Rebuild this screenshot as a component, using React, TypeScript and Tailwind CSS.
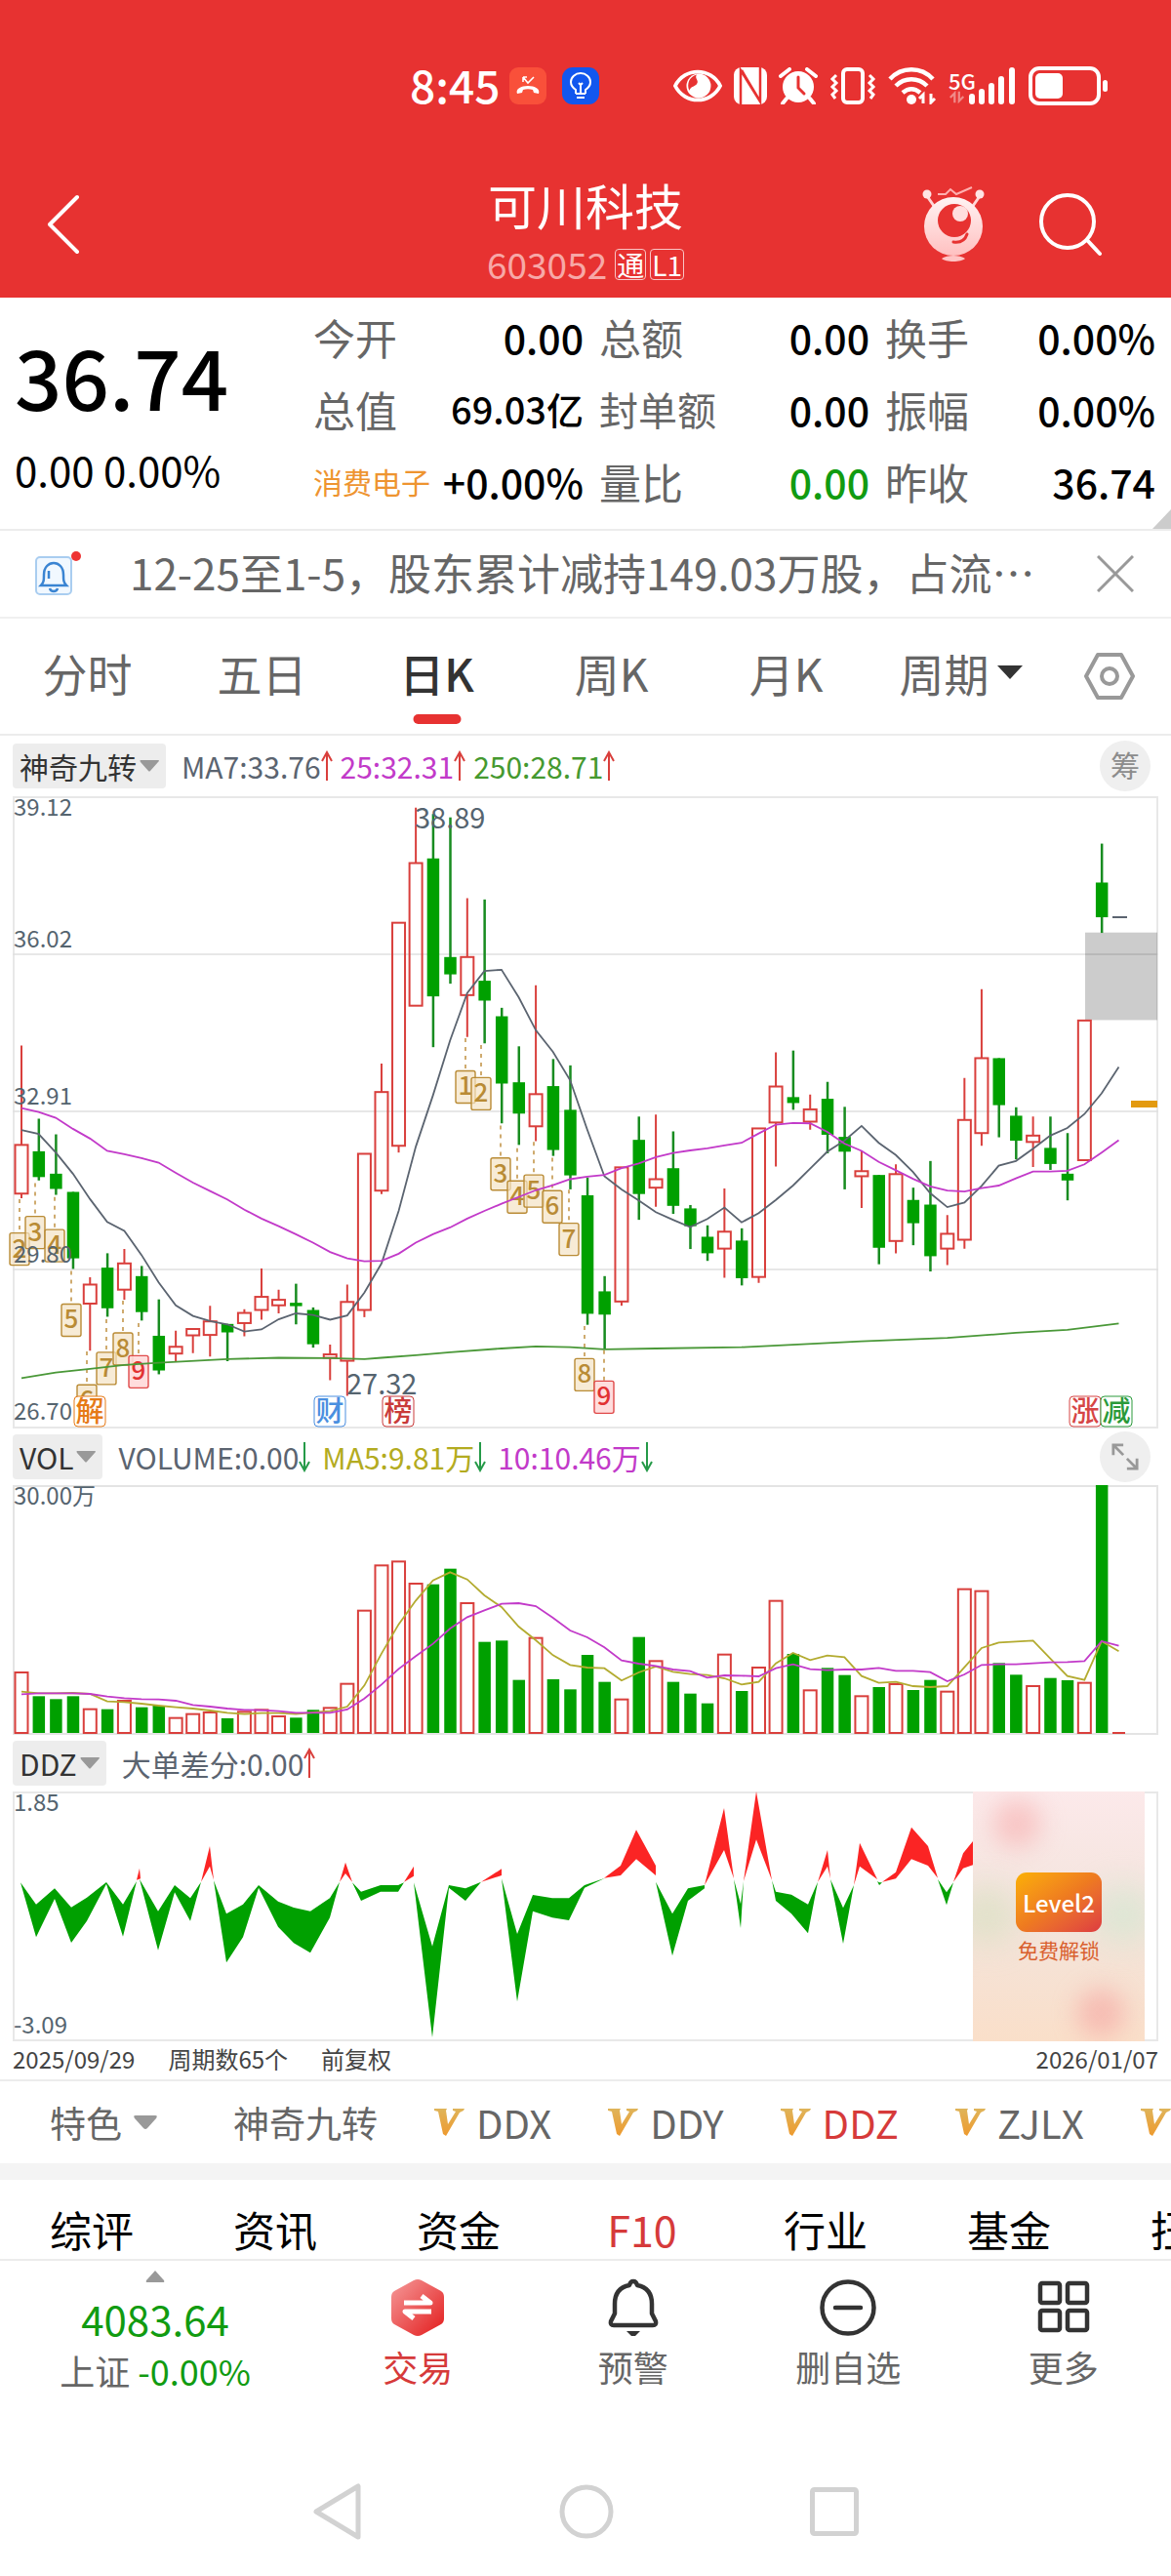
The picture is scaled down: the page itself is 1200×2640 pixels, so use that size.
// App.tsx

import type { ReactNode } from "react";

const CANDLE_RED = "#d93f3c";
const GREEN = "#00a000";
const AXIS = "#55646f";

// distance between two trading days, and the centre of the first one
const STEP = 17.57;
const FIRST = 9;
const dayX = (i: number) => FIRST + i * STEP;

// dir, high, body top, body bottom, low (chart ticks, counted downwards)
type Candle = ["r" | "g", number, number, number, number];

const CANDLES: Candle[] = [
  ["r", 627, 862, 977, 988],
  ["g", 800, 877, 938, 946],
  ["g", 837, 930, 966, 980],
  ["g", 973, 973, 1130, 1155],
  ["r", 1175, 1192, 1237, 1348],
  ["g", 1118, 1152, 1248, 1268],
  ["r", 1108, 1142, 1204, 1228],
  ["g", 1148, 1172, 1257, 1277],
  ["g", 1227, 1313, 1395, 1404],
  ["r", 1301, 1339, 1355, 1373],
  ["r", 1297, 1297, 1312, 1354],
  ["r", 1242, 1279, 1311, 1362],
  ["g", 1285, 1285, 1305, 1373],
  ["r", 1250, 1259, 1283, 1314],
  ["r", 1154, 1221, 1252, 1275],
  ["r", 1204, 1228, 1241, 1260],
  ["g", 1190, 1235, 1243, 1286],
  ["g", 1246, 1252, 1333, 1341],
  ["r", 1334, 1357, 1365, 1418],
  ["r", 1192, 1233, 1372, 1455],
  ["r", 883, 883, 1252, 1269],
  ["r", 670, 737, 970, 978],
  ["r", 337, 337, 864, 880],
  ["r", 65, 196, 533, 533],
  ["g", 80, 185, 511, 631],
  ["g", 88, 418, 459, 481],
  ["r", 279, 418, 508, 607],
  ["g", 282, 474, 521, 622],
  ["g", 538, 558, 717, 811],
  ["g", 629, 714, 788, 862],
  ["r", 485, 742, 818, 853],
  ["g", 659, 723, 874, 888],
  ["g", 674, 779, 934, 967],
  ["g", 939, 981, 1261, 1287],
  ["g", 1172, 1208, 1263, 1344],
  ["r", 915, 915, 1232, 1242],
  ["g", 795, 850, 978, 1039],
  ["r", 790, 943, 963, 1008],
  ["g", 830, 917, 1006, 1025],
  ["g", 1004, 1012, 1054, 1108],
  ["g", 1052, 1079, 1118, 1136],
  ["r", 965, 1067, 1107, 1176],
  ["g", 1059, 1088, 1177, 1194],
  ["r", 823, 823, 1174, 1188],
  ["r", 643, 724, 809, 913],
  ["g", 639, 749, 763, 779],
  ["r", 743, 778, 807, 826],
  ["g", 713, 753, 838, 882],
  ["g", 772, 843, 878, 967],
  ["r", 877, 924, 936, 1011],
  ["g", 933, 933, 1105, 1144],
  ["r", 908, 931, 1089, 1118],
  ["g", 963, 992, 1047, 1099],
  ["g", 900, 1003, 1125, 1161],
  ["r", 1028, 1072, 1107, 1146],
  ["r", 704, 803, 1086, 1107],
  ["r", 494, 657, 834, 864],
  ["g", 657, 657, 768, 844],
  ["g", 773, 793, 852, 896],
  ["r", 795, 840, 855, 914],
  ["g", 795, 869, 907, 921],
  ["g", 834, 930, 946, 993],
  ["r", 568, 568, 898, 898],
  ["g", 150, 242, 324, 361],
];

const MA7 = [
  827, 836, 880, 930, 990, 1044, 1065, 1122, 1187, 1241, 1266, 1278, 1286, 1303, 1298, 1274, 1260,
  1264, 1275, 1265, 1211, 1142, 1018, 866, 745, 615, 503, 451, 448, 513, 591, 642, 709, 826, 936,
  967, 993, 1021, 1039, 1056, 1037, 1010, 1045, 1023, 992, 958, 918, 878, 852, 817, 857, 886, 926,
  976, 1009, 998, 959, 911, 900, 871, 840, 822, 789, 740, 678,
];

const MA25 = [
  775, 784, 798, 824, 847, 876, 884, 893, 904, 928, 951, 971, 991, 1015, 1036, 1054, 1073, 1093,
  1115, 1130, 1137, 1136, 1119, 1093, 1073, 1057, 1036, 1018, 1001, 985, 969, 957, 943, 937, 933,
  917, 906, 891, 881, 875, 870, 863, 857, 835, 814, 810, 811, 831, 859, 876, 902, 922, 942, 960,
  970, 972, 964, 958, 941, 925, 925, 923, 908, 880, 851,
];

// day index, tick
const MA250: [number, number][] = [
  [0, 1413], [2, 1400], [4, 1391], [6, 1382], [8, 1377], [12, 1368], [15, 1365], [18, 1366],
  [20, 1368], [21, 1365], [23, 1359], [25, 1352], [28, 1343], [30, 1338], [32, 1340], [34, 1345],
  [37, 1343], [42, 1340], [45, 1334], [49, 1326], [54, 1318], [58, 1306], [61, 1299], [64, 1284],
];

// label, x, box top, dotted line start
const TURNS: [string, number, number, number][] = [
  ["2", 7, 1070, 990],
  ["3", 23, 1031, 952],
  ["4", 43, 1062, 985],
  ["5", 60, 1238, 1160],
  ["6", 76, 1429, 1350],
  ["7", 96, 1352, 1274],
  ["8", 113, 1306, 1230],
  ["9", 129, 1360, 1283],
  ["1", 464, 687, 610],
  ["2", 480, 703, 626],
  ["3", 500, 893, 816],
  ["4", 517, 947, 870],
  ["5", 534, 933, 855],
  ["6", 553, 970, 892],
  ["7", 570, 1047, 968],
  ["8", 586, 1367, 1290],
  ["9", 606, 1420, 1347],
];

const MARKS: [string, number, string][] = [
  ["解", 63, "#e67a17"],
  ["财", 309, "#4a8fe0"],
  ["榜", 379, "#c93a3a"],
  ["涨", 1083, "#d64545"],
  ["减", 1115, "#2a9a3a"],
];

const VOLUMES = [
  790, 866, 875, 866, 903, 906, 877, 900, 895, 930, 918, 913, 934, 911, 905, 925, 932, 908, 899,
  825, 600, 461, 449, 517, 522, 474, 577, 699, 695, 816, 684, 814, 845, 739, 822, 873, 684, 755,
  822, 858, 888, 735, 850, 775, 570, 736, 845, 779, 801, 863, 838, 826, 847, 816, 849, 534, 540,
  764, 800, 832, 810, 817, 822, 217,
];

const VOL_MA5 = [
  852, 857, 857, 856, 859, 882, 884, 889, 895, 900, 904, 910, 917, 921, 918, 918, 921, 916, 912,
  898, 833, 735, 645, 572, 510, 485, 507, 556, 592, 652, 694, 740, 770, 778, 780, 818, 793, 775,
  791, 798, 801, 811, 830, 822, 765, 733, 755, 741, 746, 804, 825, 822, 835, 838, 835, 777, 718,
  701, 698, 695, 750, 804, 816, 697, 728,
];

const VOL_MA10 = [
  860, 857, 857, 857, 859, 867, 872, 875, 876, 880, 893, 898, 904, 908, 909, 912, 917, 917, 917,
  907, 873, 830, 782, 743, 705, 658, 623, 602, 582, 580, 589, 625, 664, 685, 716, 756, 766, 773,
  784, 789, 809, 802, 803, 805, 780, 768, 783, 786, 784, 784, 779, 788, 788, 792, 820, 799, 770,
  768, 768, 765, 762, 761, 758, 697, 711,
];

// closed shapes of the DDZ ribbon: x, tick
const DDZ_GREEN = [
  "21,482 37,549 56,500 73,558 89,528 109,481 126,549 140,478 126,648 109,486 89,600 73,667 56,532 37,650",
  "143,472 162,570 179,490 195,530 206,480 195,600 179,512 162,690",
  "219,476 232,578 249,549 265,490 285,540 301,559 318,570 338,530 348,480 338,590 318,698 301,668 285,618 265,498 249,650 232,728",
  "361,482 370,510 390,490 408,490 414,482 408,510 390,510 370,538",
  "424,482 443,678 460,490 477,500 493,480 477,538 460,498 443,958",
  "514,470 530,640 546,520 566,530 583,530 599,490 620,468 599,498 583,598 566,590 546,570 530,848",
  "672,480 689,578 705,500 722,490 722,500 705,538 689,707",
  "752,472 759,548 762,478 759,622",
  "791,475 795,510 811,519 828,549 838,480 828,638 811,578 795,538",
  "851,472 864,560 875,490 864,670",
  "899,478 901,482 904,482 901,490",
  "961,472 970,512 977,482 970,551",
];

const DDZ_RED = [
  "140,474 143,438 144,470",
  "206,480 215,370 219,474 215,432",
  "348,480 354,420 361,480 354,454",
  "414,480 424,432 424,462",
  "493,480 514,440 514,460",
  "619,468 636,430 652,320 672,430 672,460 652,410 636,460",
  "722,490 742,253 752,470 742,382",
  "762,478 775,202 791,475 775,350",
  "838,480 848,382 851,470 848,432",
  "875,490 881,360 899,472 881,432",
  "904,480 918,450 934,312 951,370 961,468 951,430 934,410 918,470",
  "977,480 987,392 997,355 997,428 987,438",
];

const kY = (t: number) => (t - 38) * 0.4337;
const volY = (t: number) => (t - 217) / 3;
const ddzY = (t: number) => (t - 202) / 3;

const toLine = (ticks: number[], y: (t: number) => number) =>
  ticks.map((t, i) => `${dayX(i)},${y(t)}`).join(" ");

const toShape = (shape: string) =>
  shape
    .split(" ")
    .map((p) => p.split(",").map(Number))
    .map(([x, t]) => `${x - 13},${ddzY(t)}`)
    .join(" ");

export default function App() {
  return (
    <div className="min-h-screen overflow-hidden bg-white font-['Noto_Sans_CJK_SC','Noto_Sans',sans-serif] leading-none text-black">
      <header className="bg-[#e73231] text-white">
        <StatusBar />
        <TitleBar />
      </header>

      <QuotePanel />
      <NewsStrip />
      <PeriodTabs />

      <main className="px-[13px]">
        {/* Candles */}
        <div className="flex h-[62px] items-center">
          <PickerButton label="神奇九转" />
          <div className="ml-4 flex gap-2">
            <Reading color="text-[#5b6470]" dir="up">MA7:33.76</Reading>
            <Reading color="text-[#c23ac9]" dir="up">25:32.31</Reading>
            <Reading color="text-[#45992f]" dir="up">250:28.71</Reading>
          </div>
          <button className="mr-2 ml-auto size-[52px] rounded-full bg-[#efefef] pb-1 text-[30px] text-[#8c8c8c]">
            筹
          </button>
        </div>
        <CandleChart />

        {/* Volume */}
        <div className="flex h-[58px] items-center">
          <PickerButton label="VOL" />
          <div className="ml-4 flex gap-3">
            <Reading color="text-[#5b6470]" dir="down">VOLUME:0.00</Reading>
            <Reading color="text-[#b3ab20]" dir="down">MA5:9.81万</Reading>
            <Reading color="text-[#c23ac9]" dir="down">10:10.46万</Reading>
          </div>
          <button
            aria-label="展开"
            className="mr-2 ml-auto flex size-[52px] items-center justify-center rounded-full bg-[#efefef]"
          >
            <svg width="28" height="28" viewBox="0 0 30 30" fill="none" stroke="#999" strokeWidth="3">
              <path d="M2 13V2h11M3 3l10 10M28 17v11H17M27 27L17 17" />
            </svg>
          </button>
        </div>
        <VolumeChart />

        {/* DDZ */}
        <div className="flex h-[58px] items-center">
          <PickerButton label="DDZ" />
          <div className="ml-4 flex gap-2">
            <Reading color="text-[#5b6470]" dir="up">大单差分:0.00</Reading>
          </div>
        </div>
        <div className="relative">
          <DdzChart />
          <UnlockCard />
        </div>

        <div className="flex h-[39px] items-center gap-[34px] pb-1 text-[24px] text-[#444]">
          <span>2025/09/29</span>
          <span>周期数65个</span>
          <span>前复权</span>
          <span className="ml-auto">2026/01/07</span>
        </div>
      </main>

      <FeatureTabs />
      <SectionTabs />
      <BottomBar />
      <SystemNav />
    </div>
  );
}

/* ---------- Header ---------- */

function StatusBar() {
  return (
    <div className="flex h-[130px] items-center pt-[46px] pr-16 pl-[35%]">
      <span className="pb-1 text-[46px] font-medium">8:45</span>
      <svg className="ml-[10px] shrink-0" width="38" height="38" viewBox="0 0 38 38">
        <rect width="38" height="38" rx="9" fill="#f9503a" />
        <path d="M8 27c-2-5 4-8 11-8s13 3 11 8l-5-1-1-3c-3-1-7-1-10 0l-1 3z" fill="#fff" />
        <path d="M14 10v5M14 10h4M14 10l5 6 6-6" fill="none" stroke="#fff" strokeWidth="1.6" />
      </svg>
      <svg className="ml-4 shrink-0" width="38" height="38" viewBox="0 0 38 38">
        <rect width="38" height="38" rx="11" fill="#1257ee" />
        <path
          d="M14 27v-4c-3-2-5-5-5-8a10 9 0 0 1 20 0c0 3-2 6-5 8v4M14 27h10M15 31h8M19 27v-9M17 16l2 2 2-2"
          fill="none"
          stroke="#fff"
          strokeWidth="2"
        />
      </svg>

      <div className="ml-auto flex shrink-0 items-center">
        {/* eye */}
        <svg width="50" height="36" viewBox="0 0 52 36">
          <path d="M2 18C12-2 40-2 50 18 40 38 12 38 2 18z" fill="none" stroke="#fff" strokeWidth="4" />
          <circle cx="27" cy="18" r="13" fill="#fff" />
          <path d="M25 6c-3 4 3 6 0 10-2 3-6 2-8 7-3-7 0-15 8-17z" fill="#e73231" />
        </svg>
        {/* nfc */}
        <svg className="ml-3" width="34" height="38" viewBox="0 0 34 38">
          <rect width="34" height="38" rx="8" fill="#fff" />
          <path d="M7 38V3l20 32M27 0v35L8 3" fill="none" stroke="#e73231" strokeWidth="2.500" />
        </svg>
        {/* alarm */}
        <svg className="ml-3" width="40" height="38" viewBox="0 0 40 38">
          <circle cx="20" cy="20" r="16" fill="#fff" />
          <path d="M2 9l9-7M38 9l-9-7M8 32l-4 5M32 32l4 5" stroke="#fff" strokeWidth="4" strokeLinecap="round" />
          <path d="M20 10v11l6 6" fill="none" stroke="#e73231" strokeWidth="3" strokeLinecap="round" />
        </svg>
        {/* vibrate */}
        <svg className="ml-3" width="48" height="38" viewBox="0 0 48 38" fill="none" stroke="#fff" strokeWidth="4">
          <rect x="14" y="2" width="20" height="34" rx="4" />
          <path d="M7 8L3 12l4 4-4 4 4 4-4 4 3 4M41 8l4 4-4 4 4 4-4 4 4 4-3 4" strokeWidth="3" />
        </svg>
        {/* wifi */}
        <svg className="ml-3" width="50" height="38" viewBox="0 0 50 38" fill="none" stroke="#fff" strokeWidth="4.500">
          <path d="M2 12C14-1 34-1 46 12M8 19c9-9 23-9 32 0M15 26c6-5 12-5 18 0" />
          <circle cx="24" cy="33" r="5" fill="#fff" stroke="none" />
          <path d="M36 37v-9l-4 4M44 27v9l4-4" strokeWidth="3" />
        </svg>
        {/* cell signal */}
        <div className="ml-3 flex flex-col">
          <span className="text-[22px] font-medium">5G</span>
          <svg width="18" height="13" viewBox="0 0 20 13" fill="none" stroke="#f08a88" strokeWidth="2.500">
            <path d="M7 13V2L2 7M12 0v11l5-5" />
          </svg>
        </div>
        <svg className="-ml-2" width="50" height="38" viewBox="0 0 50 38" stroke="#fff" strokeWidth="6" strokeLinecap="round">
          <path d="M4 30v5M14 25v10M24 19v16M34 12v23M45 3v32" />
        </svg>
        {/* battery */}
        <svg className="ml-3" width="82" height="40" viewBox="0 0 82 40">
          <rect x="2" y="2" width="70" height="36" rx="9" fill="none" stroke="#fff" strokeWidth="4" />
          <rect x="7" y="7" width="28" height="26" rx="5" fill="#fff" />
          <rect x="76" y="14" width="5" height="12" rx="2.500" fill="#fff" />
        </svg>
      </div>
    </div>
  );
}

function TitleBar() {
  return (
    <div className="grid h-[175px] grid-cols-3 items-center pt-6">
      <button aria-label="返回" className="ml-11 w-fit">
        <svg width="42" height="64" viewBox="0 0 42 64" fill="none" stroke="#fff" strokeWidth="4" strokeLinecap="round" strokeLinejoin="round">
          <path d="M35 4L7 32l28 28" />
        </svg>
      </button>

      <div className="flex flex-col items-center pt-3">
        <h1 className="text-[50px] leading-[54px] font-normal">可川科技</h1>
        <div className="mt-4 flex items-center gap-1">
          <span className="mr-1 text-[37px] text-[#f7a8a7]">603052</span>
          <span className="rounded-sm border border-[#f9c4c4] px-px text-[28px] leading-[30px]">通</span>
          <span className="rounded-sm border border-[#f9c4c4] px-px text-[28px] leading-[30px]">L1</span>
        </div>
      </div>

      <div className="flex items-center justify-end gap-[54px] pr-[70px]">
        <button aria-label="助手">
          <svg width="66" height="78" viewBox="0 0 66 78">
            <defs>
              <linearGradient id="bot" x1="0" y1="0" x2="0" y2="1">
                <stop offset="0" stopColor="#fff3f3" />
                <stop offset="1" stopColor="#ffc0c0" />
              </linearGradient>
            </defs>
            <path d="M6 10l7 10M60 10l-7 10" stroke="#ffd6d6" strokeWidth="3" />
            <circle cx="6" cy="8" r="4.500" fill="#ffe4e4" />
            <circle cx="60" cy="8" r="4.500" fill="#ffe4e4" />
            <path d="M17 8h8l5-5 6 5 16-7" fill="none" stroke="#ffb0b0" strokeWidth="2" />
            <circle cx="33" cy="41" r="30" fill="url(#bot)" />
            <circle cx="34" cy="35" r="17" fill="#e73231" />
            <circle cx="40" cy="28" r="8" fill="#ffdede" />
            <path d="M33 57c7 1 12-2 14-8" fill="none" stroke="#e73231" strokeWidth="3" strokeLinecap="round" />
            <path d="M21 74c5-4 19-4 24 0-4 4-20 4-24 0z" fill="#ffc4c4" />
          </svg>
        </button>
        <button aria-label="搜索">
          <svg width="66" height="66" viewBox="0 0 66 66" fill="none" stroke="#fff" strokeWidth="4" strokeLinecap="round">
            <circle cx="30" cy="30" r="27" />
            <path d="M50 49l13 14" />
          </svg>
        </button>
      </div>
    </div>
  );
}

/* ---------- Quote ---------- */

function QuotePanel() {
  return (
    <section className="relative flex h-[239px] border-b-2 border-[#ececec] pr-4 pl-[15px]">
      <div className="w-[306px] shrink-0">
        <div className="pt-[36px] text-[85px] font-medium">36.74</div>
        <div className="pt-[34px] text-[42px]">0.00 0.00%</div>
      </div>
      <dl className="grid flex-1 grid-cols-3 grid-rows-3 gap-x-4 pt-1 pb-3">
        <Field label="今开" value="0.00" />
        <Field label="总额" value="0.00" />
        <Field label="换手" value="0.00%" />
        <Field label="总值" value="69.03亿" valueClass="text-[38px]" />
        <Field label="封单额" value="0.00" labelClass="text-[40px] text-[#666]" />
        <Field label="振幅" value="0.00%" />
        <Field label="消费电子" value="+0.00%" labelClass="text-[30px] text-[#ee9430]" />
        <Field label="量比" value="0.00" valueClass="text-[41px] text-[#119b11]" />
        <Field label="昨收" value="36.74" />
      </dl>
      <svg className="absolute right-0 bottom-0" width="19" height="20" viewBox="0 0 19 20">
        <path d="M19 0v20H0z" fill="#ccc" />
      </svg>
    </section>
  );
}

function Field({
  label,
  value,
  labelClass = "text-[43px] text-[#666]",
  valueClass = "text-[41px]",
}: {
  label: string;
  value: string;
  labelClass?: string;
  valueClass?: string;
}) {
  return (
    <div className="flex items-center justify-between whitespace-nowrap">
      <dt className={labelClass}>{label}</dt>
      <dd className={"font-medium " + valueClass}>{value}</dd>
    </div>
  );
}

function NewsStrip() {
  return (
    <section className="flex h-[90px] items-center border-b-2 border-[#f0f0f0] pr-[38px] pl-[35px]">
      <svg className="shrink-0" width="50" height="50" viewBox="0 0 50 50">
        <rect x="2" y="8" width="36" height="38" rx="4" fill="#f1f8ff" stroke="#a9cdf0" strokeWidth="2" />
        <path
          d="M7 37c3-3 3-6 3-11 0-16 20-16 20 0 0 5 0 8 3 11zM16 40c1 4 7 4 8 0M15 22v8"
          fill="none"
          stroke="#3a84d2"
          strokeWidth="2.500"
        />
        <circle cx="43" cy="7" r="5" fill="#e33" />
      </svg>
      <a href="#news" className="ml-12 min-w-0 flex-1 truncate pb-1 text-[44px] leading-[64px] text-[#666]">
        12-25至1-5，股东累计减持149.03万股，占流…
      </a>
      <button aria-label="关闭" className="ml-4">
        <svg width="38" height="38" viewBox="0 0 38 38" stroke="#999" strokeWidth="3">
          <path d="M1 1l36 36M37 1L1 37" />
        </svg>
      </button>
    </section>
  );
}

function PeriodTabs() {
  return (
    <nav className="flex h-[120px] items-center border-b-2 border-[#ececec] text-[46px] text-[#666]">
      <button className="flex-1 pb-2">分时</button>
      <button className="flex-1 pb-2">五日</button>
      <button className="relative flex-1 pb-2 font-medium text-[#333]">
        日K
        <span className="absolute top-[66px] left-1/2 h-[10px] w-[49px] -translate-x-1/2 rounded-full bg-[#e73231]" />
      </button>
      <button className="flex-1 pb-2">周K</button>
      <button className="flex-1 pb-2">月K</button>
      <button className="flex flex-1 items-center justify-center gap-2 pb-2">
        周期
        <svg width="26" height="14" viewBox="0 0 26 14">
          <path d="M0 0h26L13 14z" fill="#333" />
        </svg>
      </button>
      <button aria-label="设置" className="flex w-[126px] justify-center">
        <svg width="52" height="48" viewBox="0 0 52 48" fill="none" stroke="#999" strokeWidth="4">
          <path d="M14 2h24l12 22-12 22H14L2 24z" strokeLinejoin="round" />
          <circle cx="26" cy="24" r="8" />
        </svg>
      </button>
    </nav>
  );
}

/* ---------- Charts ---------- */

function PickerButton({ label }: { label: string }) {
  return (
    <button className="flex h-[46px] items-center gap-[3px] rounded bg-[#ededed] px-[7px] text-[30px] text-[#333]">
      {label}
      <svg width="20" height="12" viewBox="0 0 20 12">
        <path d="M1 0h18q2 0 0 2l-8 9q-1 1-2 0L1 2q-1-2 0-2z" fill="#999" />
      </svg>
    </button>
  );
}

function Reading({ color, dir, children }: { color: string; dir: "up" | "down"; children: ReactNode }) {
  return (
    <span className={"flex items-center text-[30px] " + color}>
      {children}
      {dir === "up" ? (
        <svg width="12" height="32" viewBox="0 0 12 32" fill="none" stroke={CANDLE_RED} strokeWidth="2">
          <path d="M6 31V2M1 11l5-9 5 9" />
        </svg>
      ) : (
        <svg width="12" height="32" viewBox="0 0 12 32" fill="none" stroke="#259a48" strokeWidth="2">
          <path d="M6 1v29M1 21l5 9 5-9" />
        </svg>
      )}
    </span>
  );
}

function CandleChart() {
  return (
    <svg className="block h-auto w-full overflow-visible" viewBox="0 0 1174 648" fontSize="24">
      <rect x="1" y="1" width="1172" height="646" fill="none" stroke="#e8e8e8" strokeWidth="2" />
      <path d="M0 162h1174M0 323h1174M0 485h1174" stroke="#e0e0e0" strokeWidth="1.500" />

      {/* price gap */}
      <rect x="1099" y={kY(360)} width="74" height={kY(567) - kY(360)} fill="#000" fillOpacity="0.2" />

      {CANDLES.map(([dir, high, top, bottom, low], i) => {
        const x = dayX(i);
        return dir === "g" ? (
          <g key={i} fill={GREEN}>
            <rect x={x - 1} y={kY(high)} width="2.500" height={kY(low) - kY(high)} fill="#188c20" />
            <rect x={x - 6} y={kY(top)} width="12.500" height={kY(bottom) - kY(top)} />
          </g>
        ) : (
          <g key={i} fill="none" stroke={CANDLE_RED} strokeWidth="2">
            <path d={`M${x} ${kY(high)}V${kY(top)}M${x} ${kY(bottom)}V${kY(low)}`} />
            <rect x={x - 6.5} y={kY(top)} width="13" height={kY(bottom) - kY(top)} />
          </g>
        );
      })}

      {/* nine turn marks */}
      {TURNS.map(([label, x, top, from], i) => {
        const last = label === "9";
        return (
          <g key={i}>
            <path d={`M${x} ${kY(from)}V${kY(top)}`} stroke="#c09040" strokeWidth="1.500" strokeDasharray="4 5" />
            <rect
              x={x - 10}
              y={kY(top)}
              width="20"
              height="33"
              rx="2"
              fill={last ? "#ffd9d9" : "#f3e3c5"}
              fillOpacity={last ? 0.9 : 0.7}
              stroke={last ? "#e04a4a" : "#b98b35"}
              strokeWidth="1.400"
            />
            <text
              x={x}
              y={kY(top) + 25}
              fontSize="26"
              fontWeight="500"
              textAnchor="middle"
              fill={last ? "#e23232" : "#b98b35"}
            >
              {label}
            </text>
          </g>
        );
      })}

      <g fill="none" strokeWidth="1.800">
        <polyline points={MA250.map(([i, t]) => `${dayX(i)},${kY(t)}`).join(" ")} stroke="#4a9838" />
        <polyline points={toLine(MA7, kY)} stroke="#5b6470" />
        <polyline points={toLine(MA25, kY)} stroke="#c23ac9" />
      </g>

      <path d="M1127 124h15" stroke="#5b6470" strokeWidth="2" />
      <rect x="1146" y="312" width="27" height="7" fill="#e39a10" />

      {MARKS.map(([label, x, color]) => (
        <g key={label}>
          <rect x={x} y="615" width="32" height="31" rx="4" fill="#fff" stroke={color} />
          <text x={x + 16} y="641" fontSize="29" fontWeight="500" textAnchor="middle" fill={color}>
            {label}
          </text>
        </g>
      ))}

      <g fill={AXIS}>
        <text x="1" y="20">39.12</text>
        <text x="1" y="155">36.02</text>
        <text x="1" y="316">32.91</text>
        <text x="1" y="478">29.80</text>
        <text x="1" y="639">26.70</text>
        <text x="412" y="33" fontSize="29">38.89</text>
        <text x="342" y="613" fontSize="29">27.32</text>
      </g>
    </svg>
  );
}

function VolumeChart() {
  return (
    <svg className="block h-auto w-full overflow-visible" viewBox="0 0 1174 256" fontSize="24">
      <rect x="1" y="1" width="1172" height="254" fill="none" stroke="#e4e4e4" strokeWidth="2" />
      {VOLUMES.map((t, i) => {
        const x = dayX(i);
        return CANDLES[i][0] === "g" ? (
          <rect key={i} x={x - 6} y={volY(t)} width="12.500" height={254 - volY(t)} fill={GREEN} />
        ) : (
          <rect
            key={i}
            x={x - 6.5}
            y={volY(t) + 1}
            width="13"
            height={253 - volY(t)}
            fill="#fff"
            stroke={CANDLE_RED}
            strokeWidth="2"
          />
        );
      })}
      <path d="M1127 254h13" stroke={CANDLE_RED} strokeWidth="2" />
      <g fill="none" strokeWidth="1.800">
        <polyline points={toLine(VOL_MA5, volY)} stroke="#b3ab30" />
        <polyline points={toLine(VOL_MA10, volY)} stroke="#c23ac9" />
      </g>
      <text x="1" y="20" fill={AXIS}>
        30.00万
      </text>
    </svg>
  );
}

function DdzChart() {
  return (
    <svg className="block h-auto w-full overflow-visible" viewBox="0 0 1174 256" fontSize="24">
      <rect x="1" y="1" width="1172" height="254" fill="none" stroke="#e8e8e8" strokeWidth="2" />
      {DDZ_GREEN.map((s) => (
        <polygon key={s} points={toShape(s)} fill={GREEN} />
      ))}
      {DDZ_RED.map((s) => (
        <polygon key={s} points={toShape(s)} fill="#fb2424" />
      ))}
      <g fill={AXIS}>
        <text x="1" y="20">1.85</text>
        <text x="1" y="248">-3.09</text>
      </g>
    </svg>
  );
}

function UnlockCard() {
  return (
    <button className="absolute inset-y-0 right-[14px] flex w-[15%] flex-col items-center justify-center gap-2 overflow-hidden bg-linear-to-b from-[#fce9ea] via-[#f3e4dc] to-[#fadfc9]">
      <span className="absolute top-2 left-5 size-[50px] rounded-full bg-[#f7a5a5]/50 blur-md" />
      <span className="absolute right-5 bottom-1 size-[50px] rounded-full bg-[#f59a9a]/50 blur-md" />
      <span className="absolute top-24 -left-4 size-[60px] rounded-full bg-[#cfe0b8]/50 blur-lg" />
      <span className="absolute top-24 -right-2 size-[60px] rounded-full bg-[#cfe8cf]/60 blur-lg" />
      <span className="relative flex h-[61px] w-[88px] items-center justify-center rounded-[11px] bg-linear-to-br from-[#fbb000] via-[#ee7a20] to-[#dd3a40] text-[24px] font-medium text-white">
        Level2
      </span>
      <span className="relative text-[21px] text-[#d9602e]">免费解锁</span>
    </button>
  );
}

/* ---------- Tabs below the charts ---------- */

function FeatureTabs() {
  return (
    <nav className="flex h-[103px] items-center overflow-hidden border-t-2 border-b-[17px] border-t-[#ececec] border-b-[#f4f4f4] pl-[51px] text-[37px] whitespace-nowrap text-[#666]">
      <button className="flex items-center gap-3">
        特色
        <svg width="24" height="14" viewBox="0 0 24 14">
          <path d="M2 0h20q3 0 1 3l-9 10q-2 2-4 0L1 3q-2-3 1-3z" fill="#999" />
        </svg>
      </button>
      <span className="mr-[26px] ml-[52px] h-11 w-px bg-[#e4e4e4]" />
      <button className="mr-[58px]">神奇九转</button>
      <div className="flex gap-[58px] text-[40px]">
        <VipTab label="DDX" />
        <VipTab label="DDY" />
        <VipTab label="DDZ" active />
        <VipTab label="ZJLX" />
        <VipTab label="BBD" />
      </div>
    </nav>
  );
}

function VipTab({ label, active = false }: { label: string; active?: boolean }) {
  return (
    <button className={"flex items-center gap-3 " + (active ? "text-[#d63a3a]" : "text-[#666]")}>
      <svg width="31" height="28" viewBox="0 0 31 28">
        <defs>
          <linearGradient id="vip" x1="0" y1="0" x2="0" y2="1">
            <stop offset="0" stopColor="#dfb45a" />
            <stop offset="1" stopColor="#ee9a2e" />
          </linearGradient>
        </defs>
        <path d="M0 0h13l-1 2 2 14 8-13-3-1V0h12l-1 2-4 2L12 28 9 26 4 3 0 2z" fill="url(#vip)" />
      </svg>
      {label}
    </button>
  );
}

function SectionTabs() {
  const tabs = ["综评", "资讯", "资金", "F10", "行业", "基金", "扭亏"];
  return (
    <nav className="flex h-[83px] items-center overflow-hidden border-b-2 border-[#ececec] pt-5 text-[43px] whitespace-nowrap">
      {tabs.map((tab) => (
        <button
          key={tab}
          className={"w-[188px] shrink-0 " + (tab === "F10" ? "text-[#d63a3a]" : "text-black")}
        >
          {tab}
        </button>
      ))}
    </nav>
  );
}

/* ---------- Bottom ---------- */

function BottomBar() {
  return (
    <nav className="flex h-[143px]">
      <button className="flex w-[318px] flex-col items-center pt-[10px]">
        <svg width="20" height="12" viewBox="0 0 20 12">
          <path d="M10 0l9 10q1 2-1 2H2q-2 0-1-2z" fill="#999" />
        </svg>
        <span className="mt-4 text-[42px] text-[#119b11]">4083.64</span>
        <span className="mt-[14px] text-[36px] text-[#119b11]">
          <span className="text-[#666]">上证</span> -0.00%
        </span>
      </button>
      <NavItem label="交易" active>
        <svg width="56" height="60" viewBox="0 0 56 60">
          <defs>
            <linearGradient id="trade" x1="0" y1="0" x2="1" y2="1">
              <stop offset="0" stopColor="#f59a9a" />
              <stop offset="1" stopColor="#e31c1c" />
            </linearGradient>
          </defs>
          <path d="M24 2q4-2 8 0l20 11q3 2 3 6v22q0 4-3 6L32 58q-4 2-8 0L4 47q-3-2-3-6V19q0-4 3-6z" fill="url(#trade)" />
          <path d="M14 25h27l-9-7M42 34H15l9 7" fill="none" stroke="#fff" strokeWidth="5" strokeLinejoin="round" />
        </svg>
      </NavItem>
      <NavItem label="预警">
        <svg width="52" height="60" viewBox="0 0 52 60" fill="none" stroke="#333" strokeWidth="4.500" strokeLinejoin="round">
          <path d="M26 3q3 0 4 4c10 2 15 9 15 19v10l4 8q1 4-3 4H6q-4 0-3-4l4-8V26C7 16 12 9 22 7q1-4 4-4z" />
          <path d="M19 54h14l-5 5h-4z" fill="#333" stroke="none" />
        </svg>
      </NavItem>
      <NavItem label="删自选">
        <svg width="58" height="60" viewBox="0 0 58 60" fill="none" stroke="#333" strokeWidth="4.500" strokeLinecap="round">
          <circle cx="29" cy="30" r="26.500" />
          <path d="M16 30h26" />
        </svg>
      </NavItem>
      <NavItem label="更多">
        <svg width="54" height="60" viewBox="0 0 54 60" fill="none" stroke="#333" strokeWidth="4.500">
          <rect x="3" y="5" width="20" height="20" rx="2" />
          <rect x="31" y="5" width="20" height="20" rx="2" />
          <rect x="3" y="33" width="20" height="20" rx="2" />
          <rect x="31" y="33" width="20" height="20" rx="2" />
        </svg>
      </NavItem>
    </nav>
  );
}

function NavItem({ label, active = false, children }: { label: string; active?: boolean; children: ReactNode }) {
  return (
    <button
      className={
        "flex flex-1 flex-col items-center gap-3 pt-[18px] text-[36px] " + (active ? "text-[#d63a3a]" : "text-[#666]")
      }
    >
      {children}
      {label}
    </button>
  );
}

function SystemNav() {
  return (
    <nav className="mt-[84px] flex justify-center gap-[201px] pb-7">
      <button aria-label="返回">
        <svg width="52" height="60" viewBox="0 0 52 60" fill="none" stroke="#d2d2d2" strokeWidth="5" strokeLinejoin="round">
          <path d="M47 4v52L4 30z" />
        </svg>
      </button>
      <button aria-label="主页">
        <svg width="56" height="60" viewBox="0 0 56 60" fill="none" stroke="#d2d2d2" strokeWidth="5">
          <circle cx="28" cy="30" r="25" />
        </svg>
      </button>
      <button aria-label="最近任务">
        <svg width="50" height="60" viewBox="0 0 50 60" fill="none" stroke="#d2d2d2" strokeWidth="5">
          <rect x="2.500" y="7.500" width="45" height="45" rx="2" />
        </svg>
      </button>
    </nav>
  );
}
